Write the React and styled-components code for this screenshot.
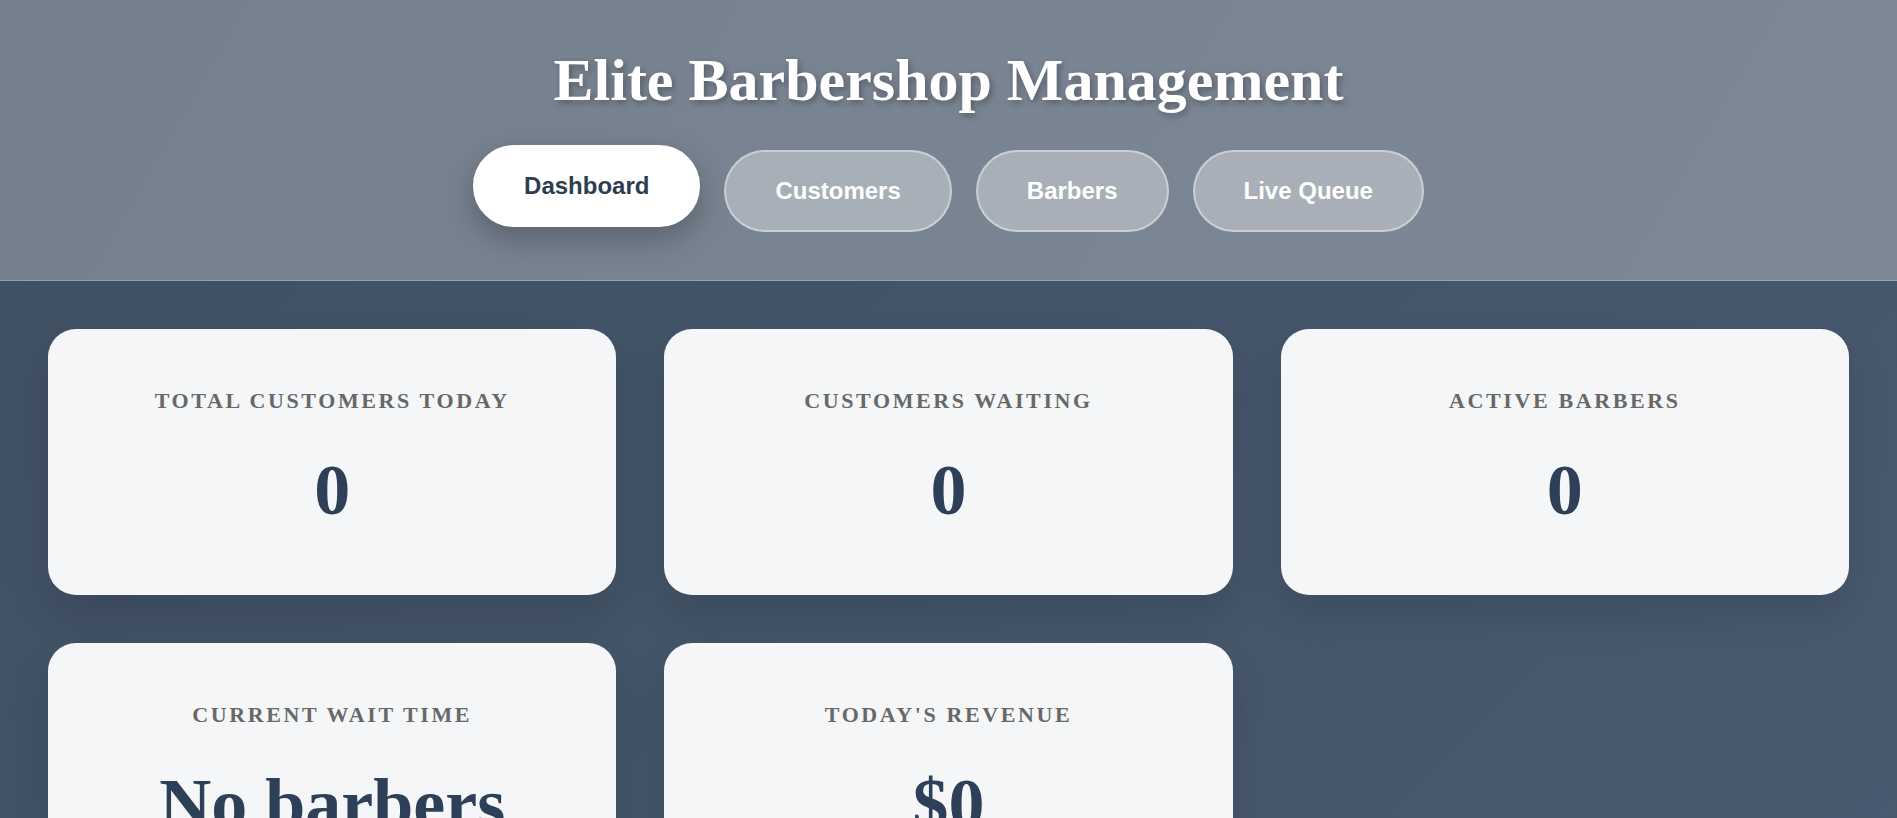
import styled, { createGlobalStyle } from "styled-components"
import { useState } from "react"

const GlobalStyle = createGlobalStyle`
  * {
    box-sizing: border-box;
  }

  html, body {
    margin: 0;
    padding: 0;
  }

  body {
    font-family: "Liberation Serif", "Times New Roman", serif;
    background: linear-gradient(135deg, #405063 0%, #445569 50%, #4a5b71 100%);
    min-height: 100vh;
  }
`

const Page = styled.div`
  min-height: 100vh;
`

const Header = styled.header`
  background: linear-gradient(120deg, #75808d 0%, #7a8593 60%, #7d8795 100%);
  border-bottom: 1px solid rgba(255, 255, 255, 0.25);
  padding: 46px 0 48px;
  display: flex;
  flex-direction: column;
  align-items: center;
`

const Title = styled.h1`
  margin: 0 0 35px;
  font-family: "Liberation Serif", "Times New Roman", serif;
  font-size: 60px;
  font-weight: 700;
  color: #ffffff;
  text-shadow: 2px 3px 6px rgba(0, 0, 0, 0.3);
`

const Nav = styled.nav`
  display: flex;
  gap: 24px;
`

const NavButton = styled.button`
  font-family: "Liberation Sans", Arial, sans-serif;
  font-size: 24px;
  font-weight: 700;
  padding: 25px 49px;
  border-radius: 50px;
  cursor: pointer;
  border: 2px solid ${({ $active }) => ($active ? "#ffffff" : "rgba(255, 255, 255, 0.4)")};
  background: ${({ $active }) => ($active ? "#ffffff" : "rgba(255, 255, 255, 0.35)")};
  color: ${({ $active }) => ($active ? "#2c3e50" : "#ffffff")};
  transform: ${({ $active }) => ($active ? "translateY(-5px)" : "none")};
  box-shadow: ${({ $active }) => ($active ? "0 12px 30px rgba(0, 0, 0, 0.25)" : "none")};
`

const Main = styled.main`
  padding: 48px;
`

const Grid = styled.div`
  display: grid;
  grid-template-columns: repeat(3, 1fr);
  gap: 48px;
`

const Card = styled.div`
  background: #f4f6f8;
  border-radius: 28px;
  padding: 59px 32px 63px;
  text-align: center;
  box-shadow: 0 20px 40px rgba(0, 0, 0, 0.12);
`

const Label = styled.div`
  font-family: "Liberation Serif", "Times New Roman", serif;
  font-size: 22px;
  font-weight: 700;
  letter-spacing: 2.6px;
  text-transform: uppercase;
  color: #686868;
  margin-bottom: 35px;
`

const Value = styled.div`
  font-family: "Liberation Serif", "Times New Roman", serif;
  font-size: 72px;
  font-weight: 700;
  color: #2d4057;
  line-height: 1.15;
`

const tabs = ["Dashboard", "Customers", "Barbers", "Live Queue"]

const stats = [
  { label: "Total Customers Today", value: "0" },
  { label: "Customers Waiting", value: "0" },
  { label: "Active Barbers", value: "0" },
  { label: "Current Wait Time", value: "No barbers available" },
  { label: "Today's Revenue", value: "$0" },
]

const App = () => {
  const [activeTab, setActiveTab] = useState("Dashboard")

  return (
    <Page>
      <GlobalStyle />
      <Header>
        <Title>Elite Barbershop Management</Title>
        <Nav>
          {tabs.map((tab) => (
            <NavButton
              key={tab}
              $active={activeTab === tab}
              onClick={() => setActiveTab(tab)}
            >
              {tab}
            </NavButton>
          ))}
        </Nav>
      </Header>

      <Main>
        <Grid>
          {stats.map((stat) => (
            <Card key={stat.label}>
              <Label>{stat.label}</Label>
              <Value>{stat.value}</Value>
            </Card>
          ))}
        </Grid>
      </Main>
    </Page>
  )
}

export default App
